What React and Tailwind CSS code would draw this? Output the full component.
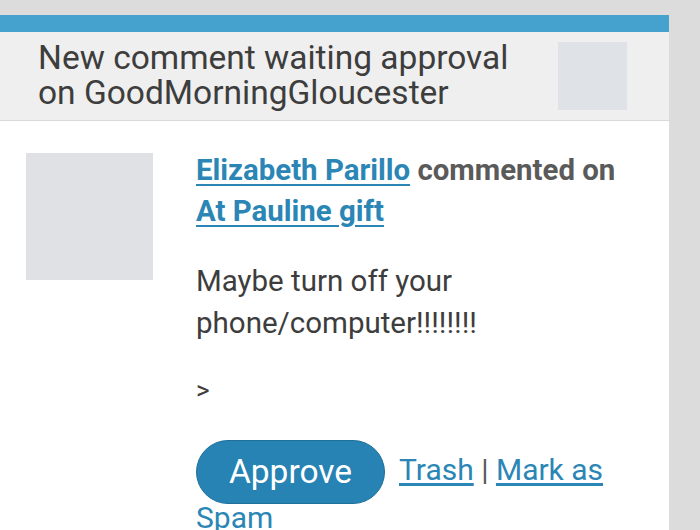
export default function App() {
  return (
    <div className="w-[700px] h-[530px] overflow-hidden bg-[#dcdcdc] pt-[15px] font-['Roboto',sans-serif]">
      <div className="w-[669px] h-full bg-white">
        {/* blue top bar */}
        <div className="h-[17px] bg-[#45a2ce]" />

        {/* header */}
        <div className="h-[89px] bg-[#efefef] border-b border-[#d9d9d9] flex items-center justify-between pl-[38px] pr-[42px]">
          <h1 className="text-[33.5px] leading-[35px] text-[#3d3d3d] font-normal -mt-[2px]">
            New comment waiting approval
            <br />
            on GoodMorningGloucester
          </h1>
          <div className="w-[69px] h-[68px] bg-[#dfe2e6]" />
        </div>

        {/* body */}
        <div className="flex items-start pl-[26px] pt-[32px]">
          <div className="w-[127px] h-[127px] bg-[#dfe1e5] shrink-0" />
          <div className="ml-[43px] w-[450px] -mt-[3px]">
            <p className="text-[29.4px] leading-[41px] font-bold text-[#5a5a5a]">
              <a href="#" className="text-[#2b86b5] underline underline-offset-[4px]">Elizabeth Parillo</a>{" "}
              commented on
              <br />
              <a href="#" className="text-[#2b86b5] underline underline-offset-[4px]">At Pauline gift</a>
            </p>
            <p className="mt-[28px] text-[29.5px] leading-[42px] text-[#3d3d3d]">
              Maybe turn off your
              <br />
              phone/computer!!!!!!!!
            </p>
            <p className="mt-[25px] text-[26px] leading-[42px] text-[#3d3d3d]">&gt;</p>
            <div className="mt-[29px] text-[30px] leading-[28px] text-[#3d3d3d] w-[420px]">
              <a
                href="#"
                className="inline-flex items-center justify-center w-[189px] h-[64px] rounded-full bg-[#2683b3] border border-[#1f6f99] text-white text-[33.5px] align-middle mr-[14px]"
              >
                Approve
              </a>
              <a href="#" className="text-[#2b86b5] underline underline-offset-[3px]">Trash</a>
              <span className="text-[#5a5a5a]"> | </span>
              <a href="#" className="text-[#2b86b5] underline underline-offset-[3px]">Mark as Spam</a>
            </div>
          </div>
        </div>
      </div>
    </div>
  );
}
